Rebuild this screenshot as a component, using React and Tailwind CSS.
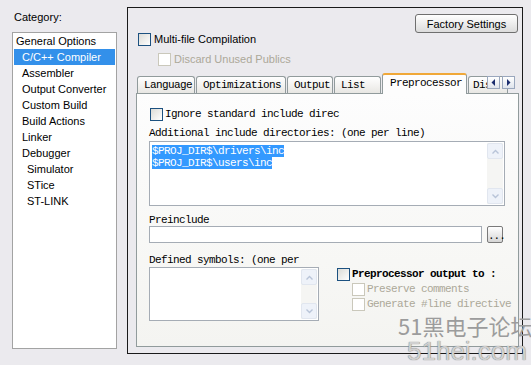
import React from "react";

const mono = "font-['Liberation_Mono',monospace] text-[11px] tracking-[-0.6px] whitespace-nowrap";

const categories = [
  { label: "General Options", indent: "pl-[2px]" },
  { label: "C/C++ Compiler", indent: "pl-[8px]", selected: true },
  { label: "Assembler", indent: "pl-[8px]" },
  { label: "Output Converter", indent: "pl-[8px]" },
  { label: "Custom Build", indent: "pl-[8px]" },
  { label: "Build Actions", indent: "pl-[8px]" },
  { label: "Linker", indent: "pl-[8px]" },
  { label: "Debugger", indent: "pl-[8px]" },
  { label: "Simulator", indent: "pl-[13px]" },
  { label: "STice", indent: "pl-[13px]" },
  { label: "ST-LINK", indent: "pl-[13px]" },
];

const tabs = [
  { label: "Language", width: "w-[58px]" },
  { label: "Optimizations", width: "w-[90px]" },
  { label: "Output", width: "w-[46px]" },
  { label: "List", width: "w-[47px]" },
];

const Check = ({ disabled }) => (
  <span
    className={
      disabled
        ? "block w-[13px] h-[13px] shrink-0 border border-[#cac8bb] bg-white"
        : "block w-[13px] h-[13px] shrink-0 border border-[#1c5180] bg-gradient-to-br from-[#dcdcd7] to-white"
    }
  />
);

const Chevron = ({ up }) => (
  <svg width="7" height="5" viewBox="0 0 7 5">
    <path
      d={up ? "M0.5 4.5 L3.5 1.5 L6.5 4.5" : "M0.5 0.5 L3.5 3.5 L6.5 0.5"}
      fill="none"
      stroke="#b8c4d8"
      strokeWidth="1.4"
    />
  </svg>
);

const VScroll = () => (
  <div className="w-[16px] h-full flex flex-col bg-[#f5f5f3]">
    <div className="h-[16px] flex items-center justify-center border border-[#e1e6ef] bg-[#eef2f9] rounded-[2px]">
      <Chevron up />
    </div>
    <div className="flex-1" />
    <div className="h-[16px] flex items-center justify-center border border-[#e1e6ef] bg-[#eef2f9] rounded-[2px]">
      <Chevron />
    </div>
  </div>
);

const Arrow = ({ left }) => (
  <div className="w-[13px] h-[13px] flex items-center justify-center border border-[#9aa7bd] bg-gradient-to-b from-white to-[#dfe4ec]">
    <svg width="5" height="7" viewBox="0 0 5 7">
      <path d={left ? "M4 0 L0.5 3.5 L4 7 Z" : "M1 0 L4.5 3.5 L1 7 Z"} fill="#1b2d6e" />
    </svg>
  </div>
);

export default function App() {
  return (
    <div className="relative w-[531px] h-[365px] overflow-hidden bg-[#ebeaee] flex items-start pl-[12px] gap-[10px] font-['Liberation_Sans',sans-serif] text-[11px] text-black">
      {/* Category list */}
      <div className="w-[105px] mt-[10px] flex flex-col">
        <div className="h-[14px] leading-[14px] pl-[2px]">Category:</div>
        <div className="mt-[8px] h-[317px] border border-[#a3a3a3] bg-white px-[1px]">
          {categories.map((c) => (
            <div
              key={c.label}
              className={`h-[16px] leading-[16px] ${c.indent} ${
                c.selected ? "bg-[#3390ea] text-white" : ""
              }`}
            >
              {c.label}
            </div>
          ))}
        </div>
      </div>

      {/* Options panel */}
      <div className="mt-[7px] w-[396px] h-[347px] border border-[#1a1a1a] flex flex-col pl-[8px] pr-[3px]">
        <div className="mt-[6px] flex justify-end pr-[1px]">
          <button className="w-[103px] h-[19px] border border-[#6f6f6f] rounded-[3px] bg-gradient-to-b from-white to-[#dcdcdc] text-[11px] leading-[16px]">
            Factory Settings
          </button>
        </div>
        <div className="flex items-center gap-[3px] ml-[2px] h-[13px]">
          <Check />
          <span>Multi-file Compilation</span>
        </div>
        <div className="flex items-center gap-[3px] ml-[22px] mt-[7px] h-[13px] text-[#aca899]">
          <Check disabled />
          <span>Discard Unused Publics</span>
        </div>

        {/* Tabs */}
        <div className={`relative mt-[7px] h-[20px] flex items-end gap-[1px] pl-[1px] ${mono}`}>
          {tabs.map((t) => (
            <div
              key={t.label}
              className={`${t.width} h-[17px] border border-b-0 border-[#919b9c] rounded-t-[3px] bg-gradient-to-b from-white to-[#e8e7e3] pl-[6px] leading-[16px]`}
            >
              {t.label}
            </div>
          ))}
          <div className="relative z-10 -mb-px w-[85px] h-[21px] border border-b-0 border-[#919b9c] border-t-[2px] border-t-[#f0a838] rounded-t-[3px] bg-[#fdfdfd] pl-[7px] leading-[17px]">
            Preprocessor
          </div>
          <div className="w-[40px] h-[17px] border border-b-0 border-[#919b9c] rounded-t-[3px] bg-gradient-to-b from-white to-[#e8e7e3] pl-[4px] leading-[16px]">
            Dis
          </div>
          <div className="absolute right-[4px] top-[3px] flex gap-[2px]">
            <Arrow left />
            <Arrow />
          </div>
        </div>

        {/* Tab pane */}
        <div className={`h-[254px] border border-[#919b9c] bg-gradient-to-b from-[#fdfdfd] to-[#f4f4f1] flex flex-col pl-[12px] ${mono}`}>
          <div className="mt-[14px] ml-[1px] flex items-center gap-[2px] h-[13px]">
            <Check />
            <span>Ignore standard include direc</span>
          </div>
          <div className="mt-[6px] h-[12px] leading-[12px]">
            Additional include directories: (one per line)
          </div>
          <div className="mt-[2px] w-[356px] h-[65px] border border-[#a5acb5] bg-white flex p-[1px]">
            <div className="flex-1 pt-[2px] pl-[1px]">
              <div className="leading-[12px]">
                <span className="bg-[#3399ff] text-white">$PROJ_DIR$\drivers\inc</span>
              </div>
              <div className="leading-[12px]">
                <span className="bg-[#3399ff] text-white">$PROJ_DIR$\users\inc</span>
              </div>
            </div>
            <VScroll />
          </div>
          <div className="mt-[8px] h-[12px] leading-[12px]">Preinclude</div>
          <div className="flex items-center">
            <div className="w-[333px] h-[17px] border border-[#a5acb5] bg-white" />
            <button className="ml-[5px] w-[16px] h-[17px] border border-[#7a7a7a] rounded-[2px] bg-gradient-to-b from-white to-[#d6d6d6] leading-[12px] tracking-[-1px] pt-[3px]">
              ...
            </button>
          </div>
          <div className="mt-[11px] h-[12px] leading-[12px]">
            Defined symbols: (one per
          </div>
          <div className="mt-[1px] flex items-start">
            <div className="w-[170px] h-[54px] border border-[#a5acb5] bg-white flex justify-end p-[1px]">
              <VScroll />
            </div>
            <div className="ml-[18px] mt-[1px] flex flex-col">
              <div className="flex items-center gap-[2px] h-[13px]">
                <Check />
                <span className="font-bold">Preprocessor output to :</span>
              </div>
              <div className="mt-[2px] ml-[15px] flex items-center gap-[2px] h-[13px] text-[#aca899]">
                <Check disabled />
                <span>Preserve comments</span>
              </div>
              <div className="mt-[2px] ml-[15px] flex items-center gap-[2px] h-[13px] text-[#aca899]">
                <Check disabled />
                <span>Generate #line directive</span>
              </div>
            </div>
          </div>
        </div>
      </div>

      {/* Watermark */}
      <div className="absolute left-[398px] top-[314px] text-[22px] leading-[22px] text-[#9c9c9c] font-['Noto_Sans_CJK_SC',sans-serif] whitespace-nowrap">
        51黑电子论坛
      </div>
      <div className="absolute left-[407px] top-[338px] text-[26px] leading-[26px] text-[#d0d0d0] font-['Liberation_Sans',sans-serif] [text-shadow:0_0_1px_#555] whitespace-nowrap">
        51hei.com
      </div>
    </div>
  );
}
